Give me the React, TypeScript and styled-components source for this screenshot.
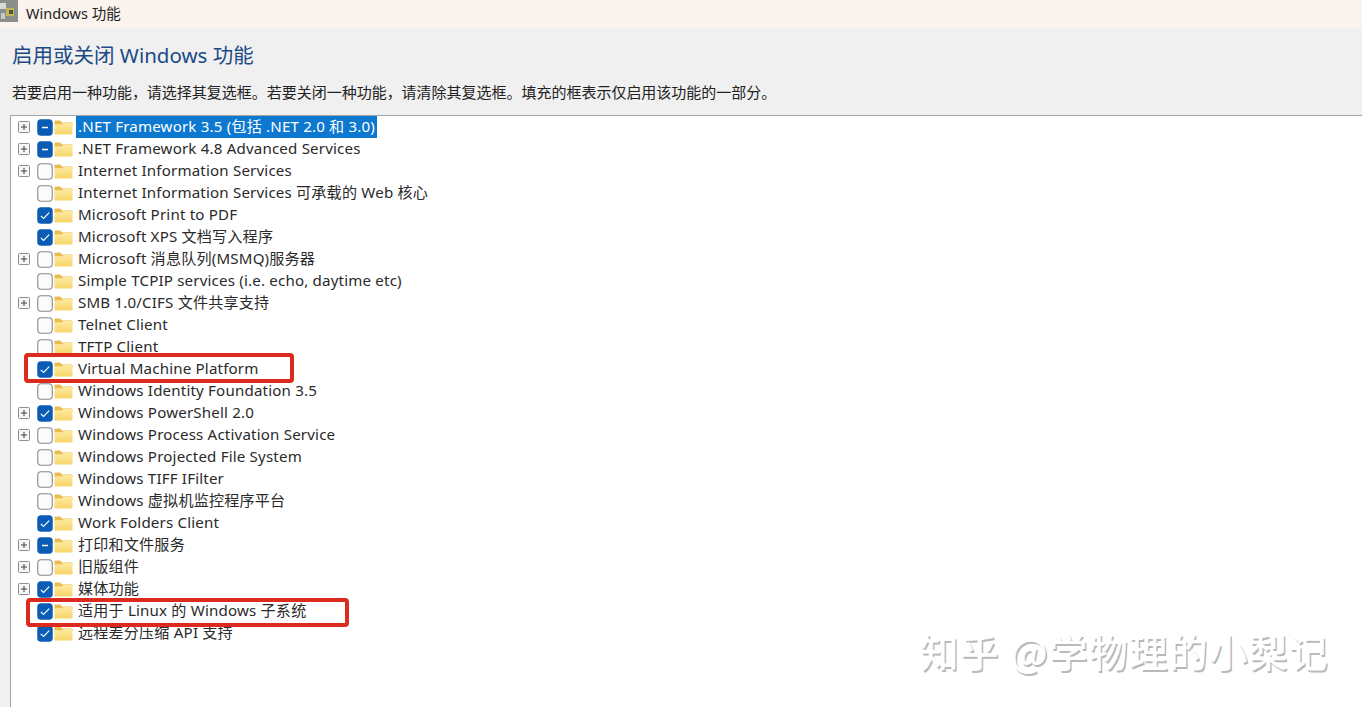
import React from "react";
import styled, { createGlobalStyle } from "styled-components";

const Global = createGlobalStyle`
  html, body { margin: 0; padding: 0; background: #f0f0f0; }
  body { font-family: "Noto Sans", "Noto Sans CJK SC", sans-serif; overflow: hidden; }
`;
const Page = styled.div`
  width: 1362px; height: 707px; display: flex; flex-direction: column; position: relative; overflow: hidden;
  font-family: "Noto Sans", "Noto Sans CJK SC", sans-serif;
`;
const TitleBar = styled.div`
  height: 28px; flex: none; box-sizing: border-box; padding-bottom: 3px; background: #faf3ee; display: flex; align-items: center; gap: 8px; color: #222; font-size: 14.5px;
`;
const AppIcon = styled.svg`width: 18px; height: 22px; flex: none; margin-top: -4px;`;
const Header = styled.div`
  height: 87px; flex: none; background: #f0f0f0; padding-left: 12px; display: flex; flex-direction: column; box-sizing: border-box;
`;
const Heading = styled.div`
  font-size: 20.5px; line-height: 28px; color: #1b4a86; margin-top: 13px; white-space: nowrap;
`;
const Intro = styled.div`
  font-size: 15px; line-height: 20px; color: #222; margin-top: 13px; white-space: nowrap; letter-spacing: -0.015px;
`;
const Body = styled.div`
  flex: 1; padding-left: 10px; display: flex; min-height: 0;
`;
const List = styled.div`
  flex: 1; background: #fff; border-left: 1px solid #a5a5a5; border-top: 1px solid #a5a5a5;
  display: flex; flex-direction: column;
`;
const Row = styled.div`
  height: 22px; flex: none; display: flex; align-items: center; padding-left: 7px;
`;
const ExpanderSlot = styled.div`
  width: 12px; height: 12px; flex: none; margin-right: 7px;
`;
const Expander = styled.svg`width: 12px; height: 12px; display: block;`;
const Check = styled.svg`width: 16px; height: 17px; flex: none; margin-right: 1px;`;
const Folder = styled.svg`width: 19px; height: 16px; flex: none; margin-right: 3px;`;
const Label = styled.span<{ $selected?: boolean }>`
  font-size: 15.1px; letter-spacing: 0.18px; line-height: 21px; white-space: nowrap; color: ${p => (p.$selected ? "#fff" : "#2a2a2a")};
  background: ${p => (p.$selected ? "#0c78d0" : "transparent")}; padding: 0 2px 1px; height: 21px;
`;
const Highlight = styled.div<{ $x: number; $y: number; $w: number; $h: number }>`
  position: absolute; left: ${p => p.$x}px; top: ${p => p.$y}px; width: ${p => p.$w}px; height: ${p => p.$h}px;
  box-sizing: border-box; border: 4px solid #dc2a1e; border-radius: 4px;
`;
const Watermark = styled.div`
  position: absolute; left: 920px; top: 624px; font-size: 38.5px; line-height: 52px; letter-spacing: 1.5px; white-space: nowrap; font-weight: 500;
  color: #fff; text-shadow: 1.5px 1.5px 0 #b9b9b9; font-family: "Noto Sans CJK SC", sans-serif;
`;

type State = "on" | "off" | "mixed";
const items: { t: string; s: State; e?: boolean; sel?: boolean }[] = [
  { t: ".NET Framework 3.5 (包括 .NET 2.0 和 3.0)", s: "mixed", e: true, sel: true },
  { t: ".NET Framework 4.8 Advanced Services", s: "mixed", e: true },
  { t: "Internet Information Services", s: "off", e: true },
  { t: "Internet Information Services 可承载的 Web 核心", s: "off" },
  { t: "Microsoft Print to PDF", s: "on" },
  { t: "Microsoft XPS 文档写入程序", s: "on" },
  { t: "Microsoft 消息队列(MSMQ)服务器", s: "off", e: true },
  { t: "Simple TCPIP services (i.e. echo, daytime etc)", s: "off" },
  { t: "SMB 1.0/CIFS 文件共享支持", s: "off", e: true },
  { t: "Telnet Client", s: "off" },
  { t: "TFTP Client", s: "off" },
  { t: "Virtual Machine Platform", s: "on" },
  { t: "Windows Identity Foundation 3.5", s: "off" },
  { t: "Windows PowerShell 2.0", s: "on", e: true },
  { t: "Windows Process Activation Service", s: "off", e: true },
  { t: "Windows Projected File System", s: "off" },
  { t: "Windows TIFF IFilter", s: "off" },
  { t: "Windows 虚拟机监控程序平台", s: "off" },
  { t: "Work Folders Client", s: "on" },
  { t: "打印和文件服务", s: "mixed", e: true },
  { t: "旧版组件", s: "off", e: true },
  { t: "媒体功能", s: "on", e: true },
  { t: "适用于 Linux 的 Windows 子系统", s: "on" },
  { t: "远程差分压缩 API 支持", s: "on" },
];

const CheckIcon = ({ s }: { s: State }) => (
  <Check viewBox="0 0 16 17">
    {s === "off" ? (
      <rect x=".75" y=".75" width="14.5" height="15.5" rx="3.5" fill="#fbfbfb" stroke="#8a8a8a" strokeWidth="1.1" />
    ) : (
      <rect x=".25" y=".25" width="15.5" height="16.5" rx="3.8" fill="#0b5cb5" />
    )}
    {s === "on" && <path d="M3.8 8.9l2.8 2.6 5.6-5.8" fill="none" stroke="#fff" strokeWidth="1.2" />}
    {s === "mixed" && <path d="M5 8.5h6" stroke="#fff" strokeWidth="1.5" />}
  </Check>
);
const FolderIcon = () => (
  <Folder viewBox="0 0 19 16">
    <defs>
      <linearGradient id="folderFill" x1="0" y1="0" x2="0" y2="1">
        <stop offset="0" stopColor="#fdeaa0" />
        <stop offset="1" stopColor="#f8d56c" />
      </linearGradient>
    </defs>
    <path d="M.5 2.5C.5 1.8 1 1.5 1.5 1.5h4.6l2 2h9.4c.6 0 1 .4 1 1V6H.5z" fill="#e9bd52" />
    <path d="M.5 5.2L8 5.2l1.5-1.2h8.2c.5 0 .8.4.8.9v9.6c0 .5-.4.9-.9.9H1.4c-.5 0-.9-.4-.9-.9z" fill="url(#folderFill)" />
  </Folder>
);
const ExpanderIcon = () => (
  <Expander viewBox="0 0 12 12">
    <rect x=".5" y=".5" width="11" height="11" rx="1" fill="#f6f6f6" stroke="#8c8c8c" />
    <path d="M3 6h6M6 3v6" stroke="#444" strokeWidth="1" />
  </Expander>
);

export default function App() {
  return (
    <Page>
      <Global />
      <TitleBar>
        <AppIcon viewBox="0 0 18 22">
          <rect width="18" height="22" fill="#8b8f8b" />
          <rect x="0" y="3" width="6" height="6" fill="#d6d9d6" />
          <rect x="6" y="8" width="8" height="8" fill="#c6b45a" />
          <rect x="9" y="10" width="4" height="4" fill="#4f5540" />
          <rect x="1" y="13" width="4" height="6" fill="#c5ccc6" />
        </AppIcon>
        Windows 功能
      </TitleBar>
      <Header>
        <Heading>启用或关闭 Windows 功能</Heading>
        <Intro>若要启用一种功能，请选择其复选框。若要关闭一种功能，请清除其复选框。填充的框表示仅启用该功能的一部分。</Intro>
      </Header>
      <Body>
        <List>
          {items.map(it => (
            <Row key={it.t}>
              <ExpanderSlot>{it.e && <ExpanderIcon />}</ExpanderSlot>
              <CheckIcon s={it.s} />
              <FolderIcon />
              <Label $selected={it.sel}>{it.t}</Label>
            </Row>
          ))}
        </List>
      </Body>
      <Highlight $x={24} $y={353} $w={270} $h={30} />
      <Highlight $x={26} $y={598} $w={323} $h={29} />
      <Watermark>知乎 @学物理的小梨记</Watermark>
    </Page>
  );
}
